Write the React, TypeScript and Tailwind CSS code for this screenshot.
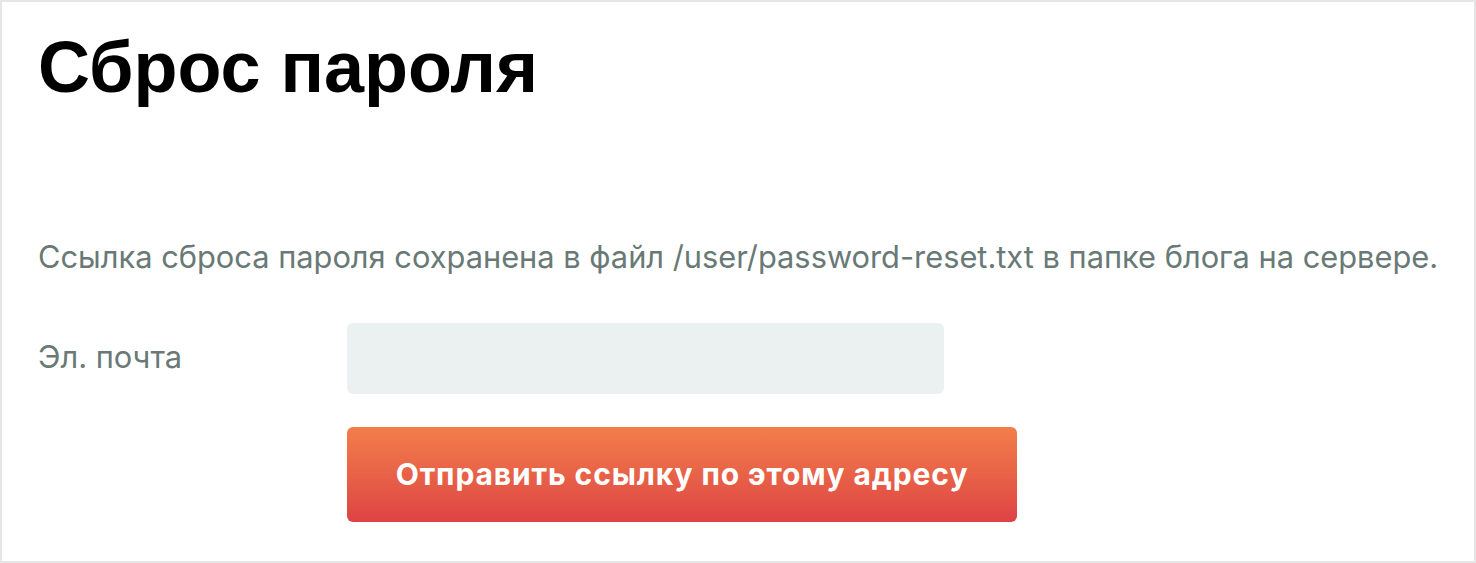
export default function App() {
	return (
		<div className="w-[1476px] h-[563px] bg-white border-2 border-[#e6e6e6] font-['Liberation_Sans',Arial,sans-serif] overflow-hidden">
			<div className="pl-[36px] pt-[23px]">
				<h1 className="text-[72px] leading-[84px] font-bold text-black">Сброс пароля</h1>
				<p className="mt-[130px] font-['Inter',sans-serif] text-[30.8px] leading-[36px] text-[#687976] whitespace-nowrap">
					Ссылка сброса пароля сохранена в файл /user/password-reset.txt в папке блога на сервере.
				</p>
				<form className="mt-[48px] grid grid-cols-[309px_auto] gap-y-[33px]">
					<label htmlFor="email" className="self-center pb-[4px] font-['Inter',sans-serif] text-[30.8px] leading-[36px] text-[#687976]">
						Эл. почта
					</label>
					<input
						id="email"
						type="email"
						className="w-[597px] h-[71px] rounded-[6px] bg-[#ebf0f0] px-4 text-[26px] outline-none"
					/>
					<div />
					<button
						type="submit"
						className="w-[670px] h-[95px] rounded-[6px] bg-gradient-to-b from-[#f27e4a] to-[#dd4244] text-white font-['Inter',sans-serif] text-[30px] tracking-[0.9px] font-bold"
					>
						Отправить ссылку по этому адресу
					</button>
				</form>
			</div>
		</div>
	)
}
